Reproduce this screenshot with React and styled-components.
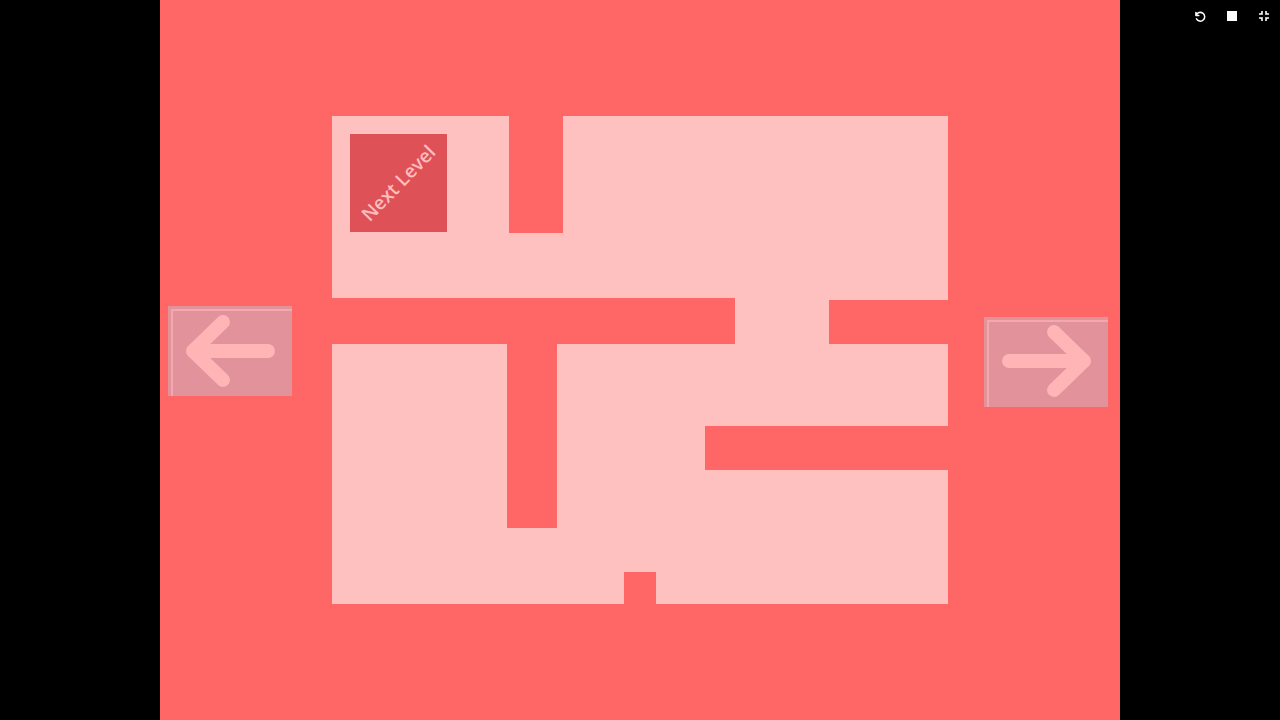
import React from "react";
import styled, { createGlobalStyle } from "styled-components";

const GlobalStyle = createGlobalStyle`
  html, body {
    margin: 0;
    padding: 0;
    background: #000;
    overflow: hidden;
  }
`;

// wall blocks cut into the maze floor, coords relative to the floor
const walls = [
  { x: 177, y: 0, w: 54, h: 117 },
  { x: 0, y: 182, w: 403, h: 46 },
  { x: 497, y: 184, w: 119, h: 44 },
  { x: 175, y: 228, w: 50, h: 184 },
  { x: 373, y: 310, w: 243, h: 44 },
  { x: 292, y: 456, w: 32, h: 32 },
];

const Arrow = ({ dir }) => (
  <svg width="124" height="90" viewBox="0 0 124 90">
    <path
      d={
        dir === "left"
          ? "M100 45 H25 M55 16 L25 45 L55 74"
          : "M25 44 H100 M70 15 L100 44 L70 73"
      }
      fill="none"
      stroke="#ffb4b6"
      strokeWidth="14"
      strokeLinecap="round"
      strokeLinejoin="round"
    />
  </svg>
);

export default function App() {
  return (
    <>
      <GlobalStyle />
      <Screen>
        <Game>
          <ArrowButton $shift={-9} aria-label="previous">
            <Arrow dir="left" />
          </ArrowButton>
          <Floor>
            {walls.map((w, i) => (
              <Wall key={i} $x={w.x} $y={w.y} $w={w.w} $h={w.h} />
            ))}
            <NextLevel>
              <span>Next Level</span>
            </NextLevel>
          </Floor>
          <ArrowButton $shift={2} aria-label="next">
            <Arrow dir="right" />
          </ArrowButton>
        </Game>
        <Toolbar>
          <ToolButton aria-label="restart">
            <svg width="14" height="14" viewBox="0 0 24 24">
              <path
                d="M5 6 V11 H10 M5.6 10.5 A7.5 7.5 0 1 1 6 17"
                fill="none"
                stroke="#fff"
                strokeWidth="2.6"
                strokeLinecap="round"
                strokeLinejoin="round"
              />
            </svg>
          </ToolButton>
          <ToolButton aria-label="stop">
            <svg width="10" height="10" viewBox="0 0 10 10">
              <rect x="0" y="0" width="10" height="10" fill="#fff" />
            </svg>
          </ToolButton>
          <ToolButton aria-label="exit fullscreen">
            <svg width="12" height="12" viewBox="0 0 24 24">
              <path
                d="M8 2 V8 H2 M16 2 V8 H22 M8 22 V16 H2 M16 22 V16 H22"
                fill="none"
                stroke="#fff"
                strokeWidth="3.2"
              />
            </svg>
          </ToolButton>
        </Toolbar>
      </Screen>
    </>
  );
}

const Screen = styled.div`
  position: relative;
  width: 1280px;
  height: 720px;
  background: #000;
  display: flex;
  justify-content: center;
`;

const Game = styled.div`
  width: 960px;
  height: 720px;
  box-sizing: border-box;
  padding: 0 12px 0 8px;
  background: #ff6666;
  overflow: hidden;
  display: flex;
  align-items: center;
`;

const Floor = styled.div`
  position: relative;
  width: 616px;
  height: 488px;
  box-sizing: border-box;
  margin: 0 36px 0 40px;
  padding: 18px;
  background: #ffc0c0;
`;

const Wall = styled.div`
  position: absolute;
  left: ${(p) => p.$x}px;
  top: ${(p) => p.$y}px;
  width: ${(p) => p.$w}px;
  height: ${(p) => p.$h}px;
  background: #ff6666;
`;

const NextLevel = styled.div`
  width: 97px;
  height: 98px;
  background: #dd5157;
  display: flex;
  align-items: center;
  justify-content: center;
  span {
    transform: rotate(-46deg);
    white-space: nowrap;
    font-family: "Open Sans", "Liberation Sans", sans-serif;
    font-weight: 600;
    font-size: 19px;
    color: #ffbcbc;
  }
`;

const ArrowButton = styled.div`
  flex: none;
  width: 124px;
  height: 90px;
  margin-top: ${(p) => Math.max(p.$shift, 0) * 2}px;
  margin-bottom: ${(p) => Math.max(-p.$shift, 0) * 2}px;
  background: #e2929a;
  box-shadow: inset 3px 3px 0 0 #e2929a, inset 5px 5px 0 0 #f2a8ac;
  display: flex;
`;

const Toolbar = styled.div`
  position: absolute;
  top: 4px;
  right: 0;
  display: flex;
`;

const ToolButton = styled.div`
  width: 32px;
  height: 24px;
  display: flex;
  align-items: center;
  justify-content: center;
`;
